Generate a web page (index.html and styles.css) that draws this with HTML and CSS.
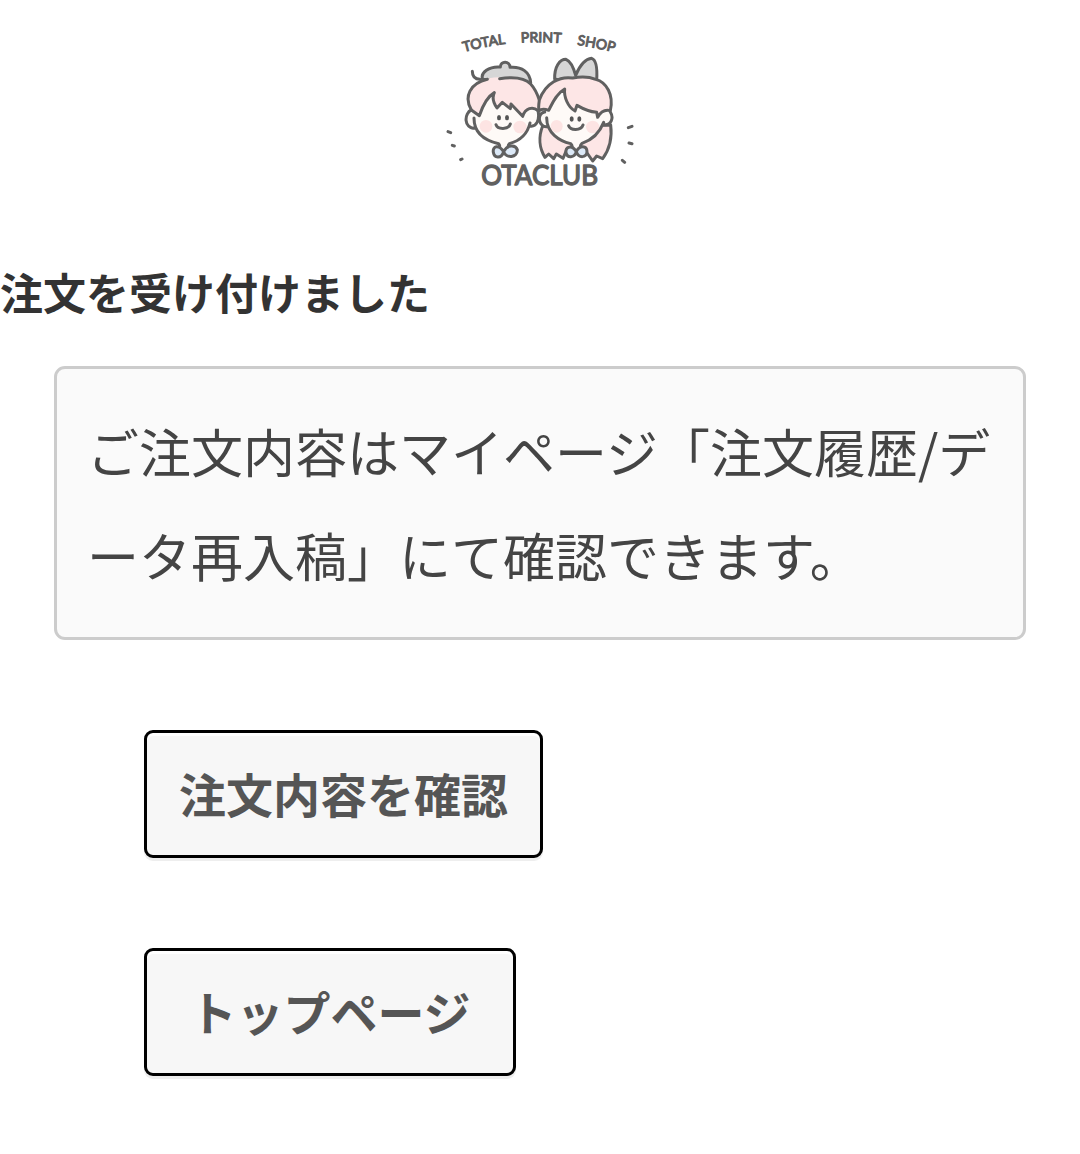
FILE: index.html
```html
<!DOCTYPE html>
<html lang="ja">
<head>
<meta charset="utf-8">
<meta name="viewport" content="width=device-width, initial-scale=1">
<title>注文を受け付けました</title>
<link rel="stylesheet" href="styles.css">
</head>
<body>
<header class="site-header">
  <svg class="logo" viewBox="0 0 660 540" role="img" aria-label="TOTAL PRINT SHOP OTACLUB">
    <defs>
      <path id="arc" d="M102 96Q330 34 570 102"/>
    </defs>
    <g class="logo-tagline">
      <text><textPath href="#arc" startOffset="0">TOTAL</textPath></text>
      <text><textPath href="#arc" startOffset="174">PRINT</textPath></text>
      <text><textPath href="#arc" startOffset="342">SHOP</textPath></text>
    </g>
    <g class="line">
      <!-- long hair behind the girl -->
      <path class="hair" d="M338 318C325 350 328 385 345 412L356 402L371 416L379 402L399 415L412 385L465 390L488 423L500 408L518 416C537 390 547 355 542 315Z"/>
      <!-- faces and ears -->
      <path class="skin" d="M125 280C104 275 100 325 135 325C145 350 170 365 205 371L211 388H232L238 371C270 365 290 345 300 317C330 322 328 270 300 266L250 225H160Z"/>
      <path class="skin" d="M345 275C318 280 324 325 353 322C365 348 390 365 422 371L430 388H451L456 370C490 360 512 337 520 315C550 318 552 276 530 276L470 230H380Z"/>
    </g>
    <g class="blush">
      <ellipse cx="168" cy="319" rx="19" ry="19"/><ellipse cx="270" cy="321" rx="20" ry="19"/>
      <ellipse cx="380" cy="319" rx="18" ry="19"/><ellipse cx="488" cy="321" rx="20" ry="19"/>
    </g>
    <g class="line">
      <!-- beret -->
      <path class="grey" d="M158 178C150 158 178 138 211 141C211 122 240 122 240 142C275 139 300 156 302 188Z"/>
      <path class="open" d="M127 154C127 170 135 178 150 178"/>
      <!-- ribbon -->
      <path class="grey" d="M374 177C373 140 389 118 408 118C423 124 432 148 437 166C448 140 464 117 485 115C501 120 502 150 500 181L437 190Z"/>
      <!-- fringes -->
      <path class="hair" stroke="none" d="M124 270C101 230 120 190 163 178C205 168 255 168 294 184C315 200 322 222 328 240C330 255 329 266 326 271C312 259 292 263 278 289L243 252L241 266L217 247L201 264C191 250 185 232 193 218C173 225 163 256 148 287Z"/>
      <path class="open" d="M124 270C101 230 120 190 172 178M209 176C250 170 285 174 302 192C316 207 323 225 328 240M124 270L148 287C158 258 172 230 193 218C186 232 191 250 201 264L217 247L241 266L243 252L278 289C286 264 308 258 324 272"/>
      <path class="hair" d="M356 271C367 250 379 221 404 207C401 230 414 262 435 273L441 256C460 267 480 275 500 277L503 292C512 275 525 268 541 272C552 224 529 186 497 178C475 169 449 170 428 174C390 168 347 188 328 240C326 254 325 265 327 273C335 265 345 267 356 271Z"/>
      <!-- ears and jaw lines -->
      <path class="open" d="M124 270C103 279 99 325 136 325M132 294C132 350 179 365 206 371Q212 378 206 385M324 272C330 300 319 322 299 318M300 309C292 344 270 362 238 371Q232 378 236 385M344 276C319 279 325 325 353 320M350 293C350 340 389 363 422 371Q429 378 425 385M541 276C552 293 544 318 521 314M521 307C508 340 488 359 456 370Q448 377 454 385"/>
      <!-- smiles -->
      <path class="open" d="M198 314C202 329 236 330 241 312M416 317C421 332 453 333 459 315"/>
      <!-- bows -->
      <path class="bow" d="M221 395C207 373 187 377 190 397C193 416 214 416 221 395C232 373 257 374 262 389C263 414 228 416 221 395Z"/>
      <path class="bow" d="M439 395C426 374 405 379 408 398C412 416 433 414 439 395C449 374 470 377 471 394C471 415 445 415 439 395Z"/>
      <!-- motion ticks -->
      <path class="open tick" d="M54 335L62 338M67 376L73 378M92 419L96 417M595 323L606 319M597 369L606 371M577 421L584 427"/>
    </g>
    <g class="eyes">
      <ellipse cx="207" cy="293" rx="6" ry="8"/><ellipse cx="231" cy="293" rx="6" ry="8"/>
      <ellipse cx="425" cy="297" rx="6" ry="8"/><ellipse cx="448" cy="297" rx="6" ry="8"/>
    </g>
    <text class="logo-name" x="329" y="495">OTACLUB</text>
  </svg>
</header>
<main>
  <h1 class="title">注文を受け付けました</h1>
  <div class="content">
    <p class="notice">ご注文内容はマイページ「注文履歴/データ再入稿」にて確認できます。</p>
    <div class="actions">
      <button class="btn" type="button">注文内容を確認</button>
      <button class="btn" type="button">トップページ</button>
    </div>
  </div>
</main>
</body>
</html>
```
FILE: styles.css
```css
* {
  box-sizing: border-box;
}

body {
  margin: 0;
  background: #fff;
  color: #333;
  font-family: "Noto Sans CJK JP", sans-serif;
}

.site-header {
  display: flex;
  justify-content: center;
  padding: 20px 0;
}

.logo {
  width: 220px;
  height: 180px;
}

.logo-tagline,
.logo-name {
  fill: #606060;
  stroke: #606060;
  stroke-linejoin: round;
  font-family: Lato, sans-serif;
  font-weight: 400;
}

.logo-tagline {
  font-size: 42px;
  stroke-width: 3px;
}

.logo-name {
  font-size: 78px;
  stroke-width: 4px;
  text-anchor: middle;
}

.line {
  stroke: #606060;
  stroke-width: 9px;
  stroke-linecap: round;
  stroke-linejoin: round;
}

.hair {
  fill: #fde6e6;
}

.skin {
  fill: #fefaf7;
  stroke: none;
}

.grey {
  fill: #d6d6d6;
}

.bow {
  fill: #dce9f7;
}

.open {
  fill: none;
}

.blush {
  fill: #fde4e3;
}

.eyes {
  fill: #555;
}

.title {
  margin: 39px 0 43px;
  font-size: 43px;
  font-weight: 700;
  line-height: 64px;
}

.content {
  margin: 0 5%;
}

.notice {
  margin: 0;
  padding: 30px;
  border: 3px solid #ccc;
  border-radius: 11px;
  background: #fafafa;
  color: #444;
  font-size: 52px;
  line-height: 104px;
  line-break: anywhere;
}

.actions {
  display: flex;
  flex-direction: column;
  align-items: flex-start;
  gap: 90px;
  padding: 90px;
}

.btn {
  min-width: 372px;
  padding: 24px 32px 26px;
  border: 3px solid #000;
  border-radius: 9px;
  background: #f7f7f7;
  box-shadow: inset 0 3px 0 #fff, 0 3px 0 #eee;
  color: #555;
  font-family: inherit;
  font-size: 47px;
  font-weight: 700;
  line-height: 72px;
  cursor: pointer;
}
```
